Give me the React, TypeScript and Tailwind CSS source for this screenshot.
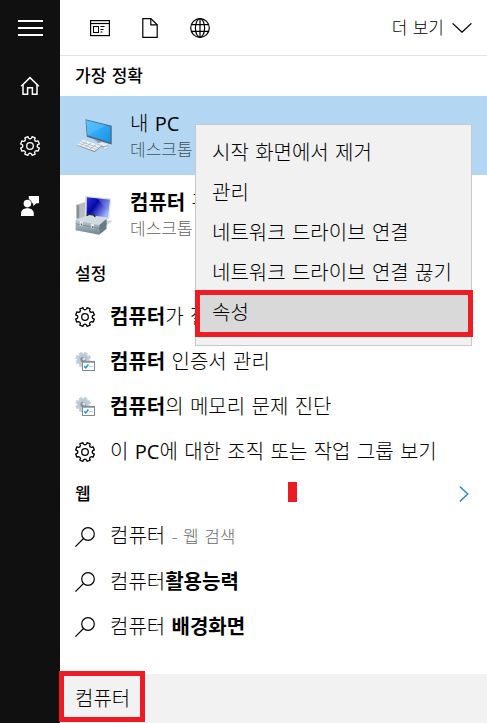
import React from 'react';

interface IconProps {
  className?: string;
}

// Outline of an eight-toothed cog centred on (10, 10)
const point = (deg: number, r: number) => {
  const a = (deg * Math.PI) / 180;
  return `${(10 + r * Math.cos(a)).toFixed(2)} ${(10 + r * Math.sin(a)).toFixed(2)}`;
};

const cogPath =
  Array.from({ length: 8 }, (_, i) => {
    const mid = 22.5 + i * 45;
    return `${i === 0 ? 'M' : 'L'}${point(mid - 10, 9.6)} L${point(mid + 10, 9.6)} L${point(mid + 12, 8)} A2.2 2.2 0 0 0 ${point(mid + 33, 8)}`;
  }).join(' ') + ' Z';

const CogIcon: React.FC<IconProps> = ({ className }) => (
  <svg className={className} viewBox="0 0 20 20" fill="none" stroke="currentColor" strokeWidth={1.3} strokeLinejoin="round">
    <path d={cogPath} />
    <circle cx="10" cy="10" r="3.3" />
  </svg>
);

const SearchIcon: React.FC<IconProps> = ({ className }) => (
  <svg className={className} viewBox="0 0 20 20" fill="none" stroke="currentColor" strokeWidth={1.2}>
    <circle cx="13" cy="7" r="6.3" />
    <path d="M8.5 11.5L.4 19.6" />
  </svg>
);

const HomeIcon: React.FC<IconProps> = ({ className }) => (
  <svg className={className} viewBox="0 0 20 20" fill="none" stroke="currentColor" strokeWidth={1.5}>
    <path d="M1.2 10.2L10 1.6l8.8 8.6" />
    <path d="M3 8.8v9.4h4.6v-6.4h4.8v6.4H17V8.8" />
  </svg>
);

const FeedbackIcon: React.FC<IconProps> = ({ className }) => (
  <svg className={className} viewBox="0 0 20 20" fill="currentColor">
    <path d="M8.8 0H19v7.2h-2.6L13.2 10V7.2h-1.4c-.1-2-1.2-3.4-3-4z" />
    <circle cx="7.4" cy="7.6" r="3.8" />
    <path d="M1 20v-2.4c0-3.2 2.4-5.4 6.4-5.4s6.4 2.2 6.4 5.4V20z" />
  </svg>
);

const AppsIcon: React.FC<IconProps> = ({ className }) => (
  <svg className={className} viewBox="0 0 20 18" fill="none" stroke="currentColor">
    <rect x=".6" y="1.6" width="18.8" height="15" strokeWidth={1.2} />
    <path d="M1 4.5h18" strokeWidth={1.2} />
    <rect x="3.5" y="7.5" width="5" height="6" />
    <path d="M10.5 7.5h4M10.5 10.5h3M10.5 13h2" />
  </svg>
);

const DocumentIcon: React.FC<IconProps> = ({ className }) => (
  <svg className={className} viewBox="0 0 16 20" fill="none" stroke="currentColor" strokeWidth={1.2}>
    <path d="M.8.6h8l6.4 6.2v12.6H.8z" />
    <path d="M8.8.6v6.2h6.4" />
  </svg>
);

const GlobeIcon: React.FC<IconProps> = ({ className }) => (
  <svg className={className} viewBox="0 0 20 20" fill="none" stroke="currentColor" strokeWidth={1.2}>
    <circle cx="10" cy="10" r="9.3" />
    <ellipse cx="10" cy="10" rx="4.6" ry="9.3" />
    <path d="M10 .7v18.6M1.2 6.7h17.6M1.2 13.3h17.6" />
  </svg>
);

const MonitorIcon: React.FC<IconProps> = ({ className }) => (
  <svg className={className} viewBox="46 64 116 110">
    <defs>
      <linearGradient id="screen" x1="0" y1="0" x2="1" y2="1">
        <stop offset="0" stopColor="#4dbcff" />
        <stop offset="1" stopColor="#1593ec" />
      </linearGradient>
    </defs>
    <path d="M102 128l26 8-4 6 24 4-14 8-24-6 6-10z" fill="#8d9ba6" />
    <path d="M112 142l14-4 22 7-13 6z" fill="#e5ebf0" />
    <path d="M78 68l80 20v57l-76-24z" fill="#4f6675" />
    <path d="M80 71l74 19v49l-70-22z" fill="url(#screen)" />
    <path d="M80 71l60 15-56 32z" fill="#6ccaff" opacity=".35" />
    <path d="M70 132l56 20-20 17-54-21z" fill="#8796a3" />
    <path d="M70 130l56 19-20 16-54-19z" fill="#eef1f3" />
    <path d="M64 136l54 19M58 141l53 19M82 135l-19 14M96 140l-19 14M110 145l-19 14" stroke="#9eabb5" strokeWidth="2" />
    <path d="M131 154l12-3 5 5-12 4z" fill="#e9eef2" stroke="#7d8c98" />
  </svg>
);

const ToolboxIcon: React.FC<IconProps> = ({ className }) => (
  <svg className={className} viewBox="40 285 124 130">
    <defs>
      <linearGradient id="blueScreen" x1="0" y1="0" x2="1" y2=".6">
        <stop offset="0" stopColor="#3038e0" />
        <stop offset=".45" stopColor="#0508a8" />
        <stop offset="1" stopColor="#9fb4ff" />
      </linearGradient>
      <linearGradient id="box" x1="0" y1="0" x2="0" y2="1">
        <stop offset="0" stopColor="#bccbd2" />
        <stop offset="1" stopColor="#71858f" />
      </linearGradient>
    </defs>
    <path d="M120 364l40 4-18 14z" fill="#d4d4d4" />
    <path d="M48 318l27-8v48l-27 8z" fill="#b9bdc0" />
    <path d="M48 318l8 3v40l-8-2z" fill="#8a8f93" />
    <path d="M75 291l80 8-6 64-76-9z" fill="#dadcde" />
    <path d="M80 295l71 8-6 55-66-9z" fill="url(#blueScreen)" />
    <path d="M112 298l39 5-4 35z" fill="#7f90f5" opacity=".4" />
    <path d="M78 358c4-16 28-14 27 2" fill="none" stroke="#2b2f33" strokeWidth="5" />
    <path d="M45 365l32-13 64 10-23 19z" fill="#cfdbe0" />
    <path d="M45 365l73 16v30l-73-14z" fill="url(#box)" />
    <path d="M118 381l23-19v31l-23 18z" fill="#687b86" />
    <path d="M45 377l73 15 23-16" fill="none" stroke="#5b6d77" strokeWidth="1.5" />
    <path d="M58 369h9v14h-9zM93 377h9v14h-9z" fill="#e7edf0" />
    <path d="M61 376h4v6h-4zM96 384h4v6h-4z" fill="#6a5a48" />
  </svg>
);

const AdminToolIcon: React.FC<IconProps> = ({ className }) => (
  <svg className={className} viewBox="0 0 20 20" fill="none">
    <g transform="translate(.6 0) scale(.76)">
      <path d={cogPath} fill="#bccad3" stroke="#c5d1d8" strokeWidth="1.5" />
      <circle cx="10" cy="10" r="3.6" fill="#7b8f9b" />
      <circle cx="11" cy="9" r="2.2" fill="#dbe3e8" />
    </g>
    <rect x="7.5" y="9.5" width="12" height="9" fill="#fff" stroke="#7f8a91" />
    <path d="M7 10.2h13" stroke="#7f8a91" />
    <path d="M9.3 14.2l1.5 1.7 2.6-3.4" stroke="#1c8ae6" strokeWidth="1.4" />
    <path d="M14.2 14.5h3.6" stroke="#c3c9cd" />
  </svg>
);

const Latin: React.FC<{ children: React.ReactNode }> = ({ children }) => (
  <span className="font-['Open_Sans',sans-serif] font-normal">{children}</span>
);

const appResults = [
  { id: 'pc', icon: <MonitorIcon className="h-9 w-10" />, title: <>내 <Latin>PC</Latin></>, selected: true },
  { id: 'manage', icon: <ToolboxIcon className="h-11 w-10" />, title: <><b className="font-bold">컴퓨터</b> 관리</>, selected: false },
];

const settings = [
  { id: 'sleep', icon: <CogIcon className="size-5" />, title: <><b className="font-bold">컴퓨터</b>가 절전</> },
  { id: 'cert', icon: <AdminToolIcon className="size-5" />, title: <><b className="font-bold">컴퓨터</b> 인증서 관리</> },
  { id: 'memory', icon: <AdminToolIcon className="size-5" />, title: <><b className="font-bold">컴퓨터</b>의 메모리 문제 진단</> },
  { id: 'group', icon: <CogIcon className="size-5" />, title: <>이 <Latin>PC</Latin>에 대한 조직 또는 작업 그룹 보기</> },
];

const webResults = [
  { id: 'search', title: <>컴퓨터 <span className="text-[17px] text-[#6a6a6a]">- 웹 검색</span></> },
  { id: 'cert', title: <>컴퓨터<b className="font-bold">활용능력</b></> },
  { id: 'wallpaper', title: <>컴퓨터 <b className="font-bold">배경화면</b></> },
];

const menuItems = ['시작 화면에서 제거', '관리', '네트워크 드라이브 연결', '네트워크 드라이브 연결 끊기', '속성'];

const SectionTitle: React.FC<{ children: React.ReactNode }> = ({ children }) => (
  <h2 className="flex h-10 items-center px-[15px] text-[17px] font-medium">{children}</h2>
);

const ResultRow: React.FC<{ icon: React.ReactNode; children: React.ReactNode }> = ({ icon, children }) => (
  <li>
    <button className="flex h-[45px] w-full items-center gap-[15px] px-[15px] text-left whitespace-nowrap">
      {icon}
      <span>{children}</span>
    </button>
  </li>
);

const Sidebar: React.FC = () => (
  <nav className="flex w-15 shrink-0 flex-col bg-[#101010] text-white">
    <button className="flex h-14 items-center justify-center" aria-label="메뉴">
      <svg className="h-4 w-[25px]" viewBox="0 0 25 16" fill="currentColor">
        <path d="M0 0h25v2H0zM0 7h25v2H0zM0 14h25v2H0z" />
      </svg>
    </button>
    <button className="flex h-15 items-center justify-center" aria-label="홈">
      <HomeIcon className="size-5" />
    </button>
    <button className="flex h-15 items-center justify-center" aria-label="설정">
      <CogIcon className="size-5" />
    </button>
    <button className="flex h-15 items-center justify-center" aria-label="피드백">
      <FeedbackIcon className="size-5" />
    </button>
  </nav>
);

const ContextMenu: React.FC = () => (
  <div role="menu" className="absolute top-[124px] right-[15px] left-[135px] border border-[#c8c8c8] bg-[#f1f1f1] pt-2 pb-3">
    {menuItems.map((item, index) => {
      const active = index === menuItems.length - 1;
      return (
        <button
          key={item}
          role="menuitem"
          className={`relative flex h-10 w-full items-center px-4 whitespace-nowrap ${active ? 'bg-[#d9d9d9]' : ''}`}
        >
          {item}
          {active && <span className="absolute -top-[3px] -right-0.5 -bottom-1 -left-px border-5 border-[#ed1c24]" />}
        </button>
      );
    })}
  </div>
);

const App: React.FC = () => {
  const [query, setQuery] = React.useState('컴퓨터');

  return (
    <div className="flex min-h-screen bg-white font-['DejaVu_Sans','Noto_Sans_CJK_KR',sans-serif] text-[20px] leading-7 font-light text-black">
      <Sidebar />
      <main className="relative flex min-w-0 flex-1 flex-col">
        <header className="flex h-14 items-center justify-between border-b border-[#e3e3e3] pr-[15px] pl-[30px]">
          <div className="flex items-center">
            <button className="w-[52px]" aria-label="앱">
              <AppsIcon className="h-[18px] w-5" />
            </button>
            <button className="w-12" aria-label="문서">
              <DocumentIcon className="h-5 w-4" />
            </button>
            <button aria-label="웹">
              <GlobeIcon className="size-5" />
            </button>
          </div>
          <button className="flex items-center gap-2 text-[17px]">
            더 보기
            <svg className="h-2.5 w-5" viewBox="0 0 20 10" fill="none" stroke="currentColor" strokeWidth={1.3}>
              <path d="M.6.4L10 9.2 19.4.4" />
            </svg>
          </button>
        </header>

        <SectionTitle>가장 정확</SectionTitle>
        <ul>
          {appResults.map((result) => (
            <li key={result.id}>
              <button
                className={`flex h-[79px] w-full items-center gap-4 px-[14px] text-left ${result.selected ? 'bg-[#b3d6f2]' : ''}`}
              >
                {result.icon}
                <span className="flex flex-col">
                  <span>{result.title}</span>
                  <span className="text-[17px] leading-6 text-black/65">데스크톱</span>
                </span>
              </button>
            </li>
          ))}
        </ul>

        <SectionTitle>설정</SectionTitle>
        <ul>
          {settings.map((item) => (
            <ResultRow key={item.id} icon={item.icon}>{item.title}</ResultRow>
          ))}
        </ul>

        <div className="relative flex items-center justify-between pr-[18px]">
          <SectionTitle>웹</SectionTitle>
          <span className="absolute top-2 left-[228px] h-5 w-[9px] bg-[#ed1c24]" />
          <button aria-label="웹 결과 더 보기">
            <svg className="h-4 w-2.5 text-[#1683dc]" viewBox="0 0 10 16" fill="none" stroke="currentColor" strokeWidth={1.3}>
              <path d="M.8.5L8.8 8l-8 7.5" />
            </svg>
          </button>
        </div>
        <ul>
          {webResults.map((item) => (
            <ResultRow key={item.id} icon={<SearchIcon className="size-5" />}>{item.title}</ResultRow>
          ))}
        </ul>

        <div className="relative mt-auto flex h-[49px] bg-[#f2f2f2]">
          <input
            type="text"
            aria-label="검색"
            value={query}
            onChange={(e) => setQuery(e.target.value)}
            className="w-full bg-transparent px-[15px] outline-none"
          />
          <span className="pointer-events-none absolute -top-[3px] bottom-px -left-px w-[86px] border-5 border-[#ed1c24]" />
        </div>

        <ContextMenu />
      </main>
    </div>
  );
};

export default App;
